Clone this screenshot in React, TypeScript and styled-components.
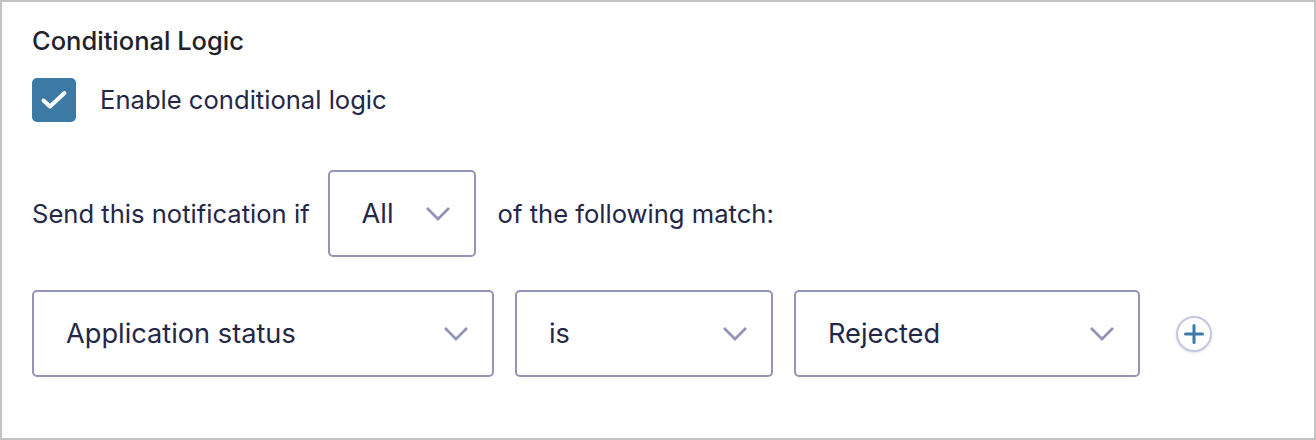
import React from "react";
import styled, { createGlobalStyle } from "styled-components";

const Global = createGlobalStyle`
  html, body { margin: 0; padding: 0; background: #ffffff; }
  body { font-family: Inter, "Noto Sans", sans-serif; }
  * { box-sizing: border-box; }
`;

const Panel = styled.section`
  width: 1316px;
  height: 440px;
  border: 2px solid #c3c3c3;
  padding: 24px 30px 0 30px;
  display: flex;
  flex-direction: column;
  color: #242748;
`;

const Heading = styled.h2`
  margin: 0;
  font-size: 25.5px;
  font-weight: 500;
  line-height: 30px;
  color: #1f2329;
`;

const CheckRow = styled.label`
  display: flex;
  align-items: center;
  gap: 24px;
  margin-top: 22px;
  font-size: 25.6px;
  line-height: 30px;
`;

const CheckBox = styled.span`
  width: 44px;
  height: 44px;
  border-radius: 5px;
  background: #3d79a5;
  display: flex;
  align-items: center;
  justify-content: center;
  flex: none;
`;

const MatchRow = styled.div`
  display: flex;
  align-items: center;
  gap: 18px;
  margin-top: 48px;
  font-size: 25.6px;
  line-height: 30px;
`;

const Trailing = styled.span`
  margin-left: 4px;
`;

const ConditionRow = styled.div`
  display: flex;
  align-items: center;
  gap: 21px;
  margin-top: 33px;
`;

const Select = styled.div<{ $w: number }>`
  width: ${(p) => p.$w}px;
  height: 87px;
  border: 2px solid #9394b8;
  border-radius: 5px;
  display: flex;
  align-items: center;
  justify-content: space-between;
  padding: 0 24px 0 32px;
  font-size: 27.2px;
  color: #242748;
  flex: none;
`;

const AddButton = styled.button`
  width: 36px;
  height: 36px;
  margin-left: 15px;
  border-radius: 50%;
  border: 2px solid #c6c7de;
  background: #ffffff;
  box-shadow: 0 1px 3px rgba(60, 60, 100, 0.15);
  display: flex;
  align-items: center;
  justify-content: center;
  padding: 0;
  flex: none;
`;

const Chevron = () => (
  <svg width="24" height="14" viewBox="0 0 24 14" fill="none">
    <path d="M2 2 L12 12 L22 2" stroke="#9394b8" strokeWidth="2.8" strokeLinecap="square" />
  </svg>
);

export default function App() {
  return (
    <>
      <Global />
      <Panel>
        <Heading>Conditional Logic</Heading>
        <CheckRow>
          <CheckBox>
            <svg width="28" height="22" viewBox="0 0 28 22" fill="none">
              <path d="M3.5 11.5 L10 17.5 L24.5 4" stroke="#ffffff" strokeWidth="4" strokeLinecap="round" strokeLinejoin="round" />
            </svg>
          </CheckBox>
          Enable conditional logic
        </CheckRow>
        <MatchRow>
          <span>Send this notification if</span>
          <Select $w={148}>
            All
            <Chevron />
          </Select>
          <Trailing>of the following match:</Trailing>
        </MatchRow>
        <ConditionRow>
          <Select $w={462}>
            Application status
            <Chevron />
          </Select>
          <Select $w={258}>
            is
            <Chevron />
          </Select>
          <Select $w={346}>
            Rejected
            <Chevron />
          </Select>
          <AddButton aria-label="Add condition">
            <svg width="20" height="20" viewBox="0 0 20 20" fill="none">
              <path d="M10 1.5 V18.5 M1.5 10 H18.5" stroke="#3d79a5" strokeWidth="3" strokeLinecap="round" />
            </svg>
          </AddButton>
        </ConditionRow>
      </Panel>
    </>
  );
}
